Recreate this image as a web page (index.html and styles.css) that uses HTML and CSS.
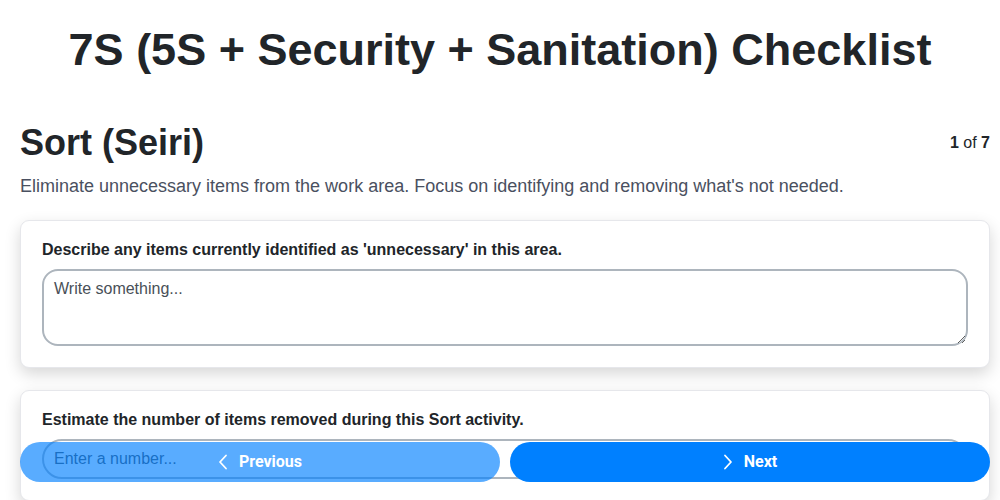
FILE: index.html
```html
<!DOCTYPE html>
<html lang="en">
<head>
<meta charset="utf-8">
<title>7S Checklist</title>
<link rel="stylesheet" href="styles.css">
</head>
<body>
<main class="page">
  <h1 class="title">7S (5S + Security + Sanitation) Checklist</h1>
  <div class="section-head">
    <h2 class="section-title">Sort (Seiri)</h2>
    <div class="counter"><b>1</b> of <b>7</b></div>
  </div>
  <p class="section-desc">Eliminate unnecessary items from the work area. Focus on identifying and removing what's not needed.</p>
  <div class="card">
    <label class="q-label" for="q1">Describe any items currently identified as 'unnecessary' in this area.</label>
    <textarea id="q1" class="q-textarea" placeholder="Write something..."></textarea>
  </div>
  <div class="card">
    <label class="q-label" for="q2">Estimate the number of items removed during this Sort activity.</label>
    <input id="q2" class="q-input" type="number" placeholder="Enter a number...">
  </div>
</main>
<nav class="nav-bar">
  <button class="nav-btn prev" type="button">
    <svg class="chev" viewBox="0 0 10 16" width="10" height="16"><path d="M8 1.5 L2 8 L8 14.5" fill="none" stroke="#fff" stroke-width="1.8" stroke-linecap="round" stroke-linejoin="round"/></svg>
    <span>Previous</span>
  </button>
  <button class="nav-btn next" type="button">
    <svg class="chev" viewBox="0 0 10 16" width="10" height="16"><path d="M2 1.5 L8 8 L2 14.5" fill="none" stroke="#fff" stroke-width="1.8" stroke-linecap="round" stroke-linejoin="round"/></svg>
    <span>Next</span>
  </button>
</nav>
</body>
</html>
```
FILE: styles.css
```css
* { box-sizing: border-box; }
html, body { margin: 0; padding: 0; background: #fff; }
body {
  font-family: "Liberation Sans", Arial, sans-serif;
  color: #212529;
}
.page {
  padding: 0 10px 80px 20px;
}
.title {
  margin: 23px 0 0 -10px;
  font-size: 45px;
  line-height: 1.2;
  font-weight: 700;
  text-align: center;
  color: #212529;
}
.section-head {
  display: flex;
  align-items: center;
  justify-content: space-between;
  margin-top: 44px;
}
.section-title {
  margin: 0;
  font-size: 36px;
  line-height: 1.2;
  font-weight: 700;
  color: #212529;
}
.counter {
  font-size: 16px;
  color: #212529;
}
.section-desc {
  margin: 9px 0 20px;
  font-size: 18px;
  line-height: 1.5;
  color: #4a5060;
}
.card {
  background: #fff;
  border: 1px solid #e6e7eb;
  border-radius: 9px;
  box-shadow: 0 6px 16px rgba(0, 0, 0, 0.16);
  padding: 17px 21px 21px;
  margin-bottom: 22px;
}
.q-label {
  display: block;
  font-size: 16px;
  line-height: 24px;
  font-weight: 700;
  color: #212529;
  margin-bottom: 7px;
}
.q-textarea, .q-input {
  display: block;
  width: 100%;
  border: 2px solid #adb5bd;
  border-radius: 16px;
  font-family: "Liberation Sans", Arial, sans-serif;
  font-size: 16px;
  color: #212529;
  padding: 9px 10px;
  background: #fff;
}
.q-textarea { height: 77px; resize: vertical; }
.q-input { height: 40px; border-radius: 20px; }
.q-textarea::placeholder, .q-input::placeholder { color: #495057; opacity: 1; }
.nav-bar {
  position: fixed;
  left: 20px;
  right: 10px;
  bottom: 18px;
  display: flex;
  gap: 10px;
}
.nav-btn {
  flex: 1;
  height: 40px;
  border: none;
  border-radius: 20px;
  background: #0080ff;
  color: #fff;
  font-family: Roboto, "Liberation Sans", sans-serif;
  font-size: 16px;
  font-weight: 700;
  display: flex;
  align-items: center;
  justify-content: center;
  gap: 11px;
  padding: 0 0 1px;
}
.nav-btn.prev { opacity: 0.65; }
.chev { display: block; }
```
